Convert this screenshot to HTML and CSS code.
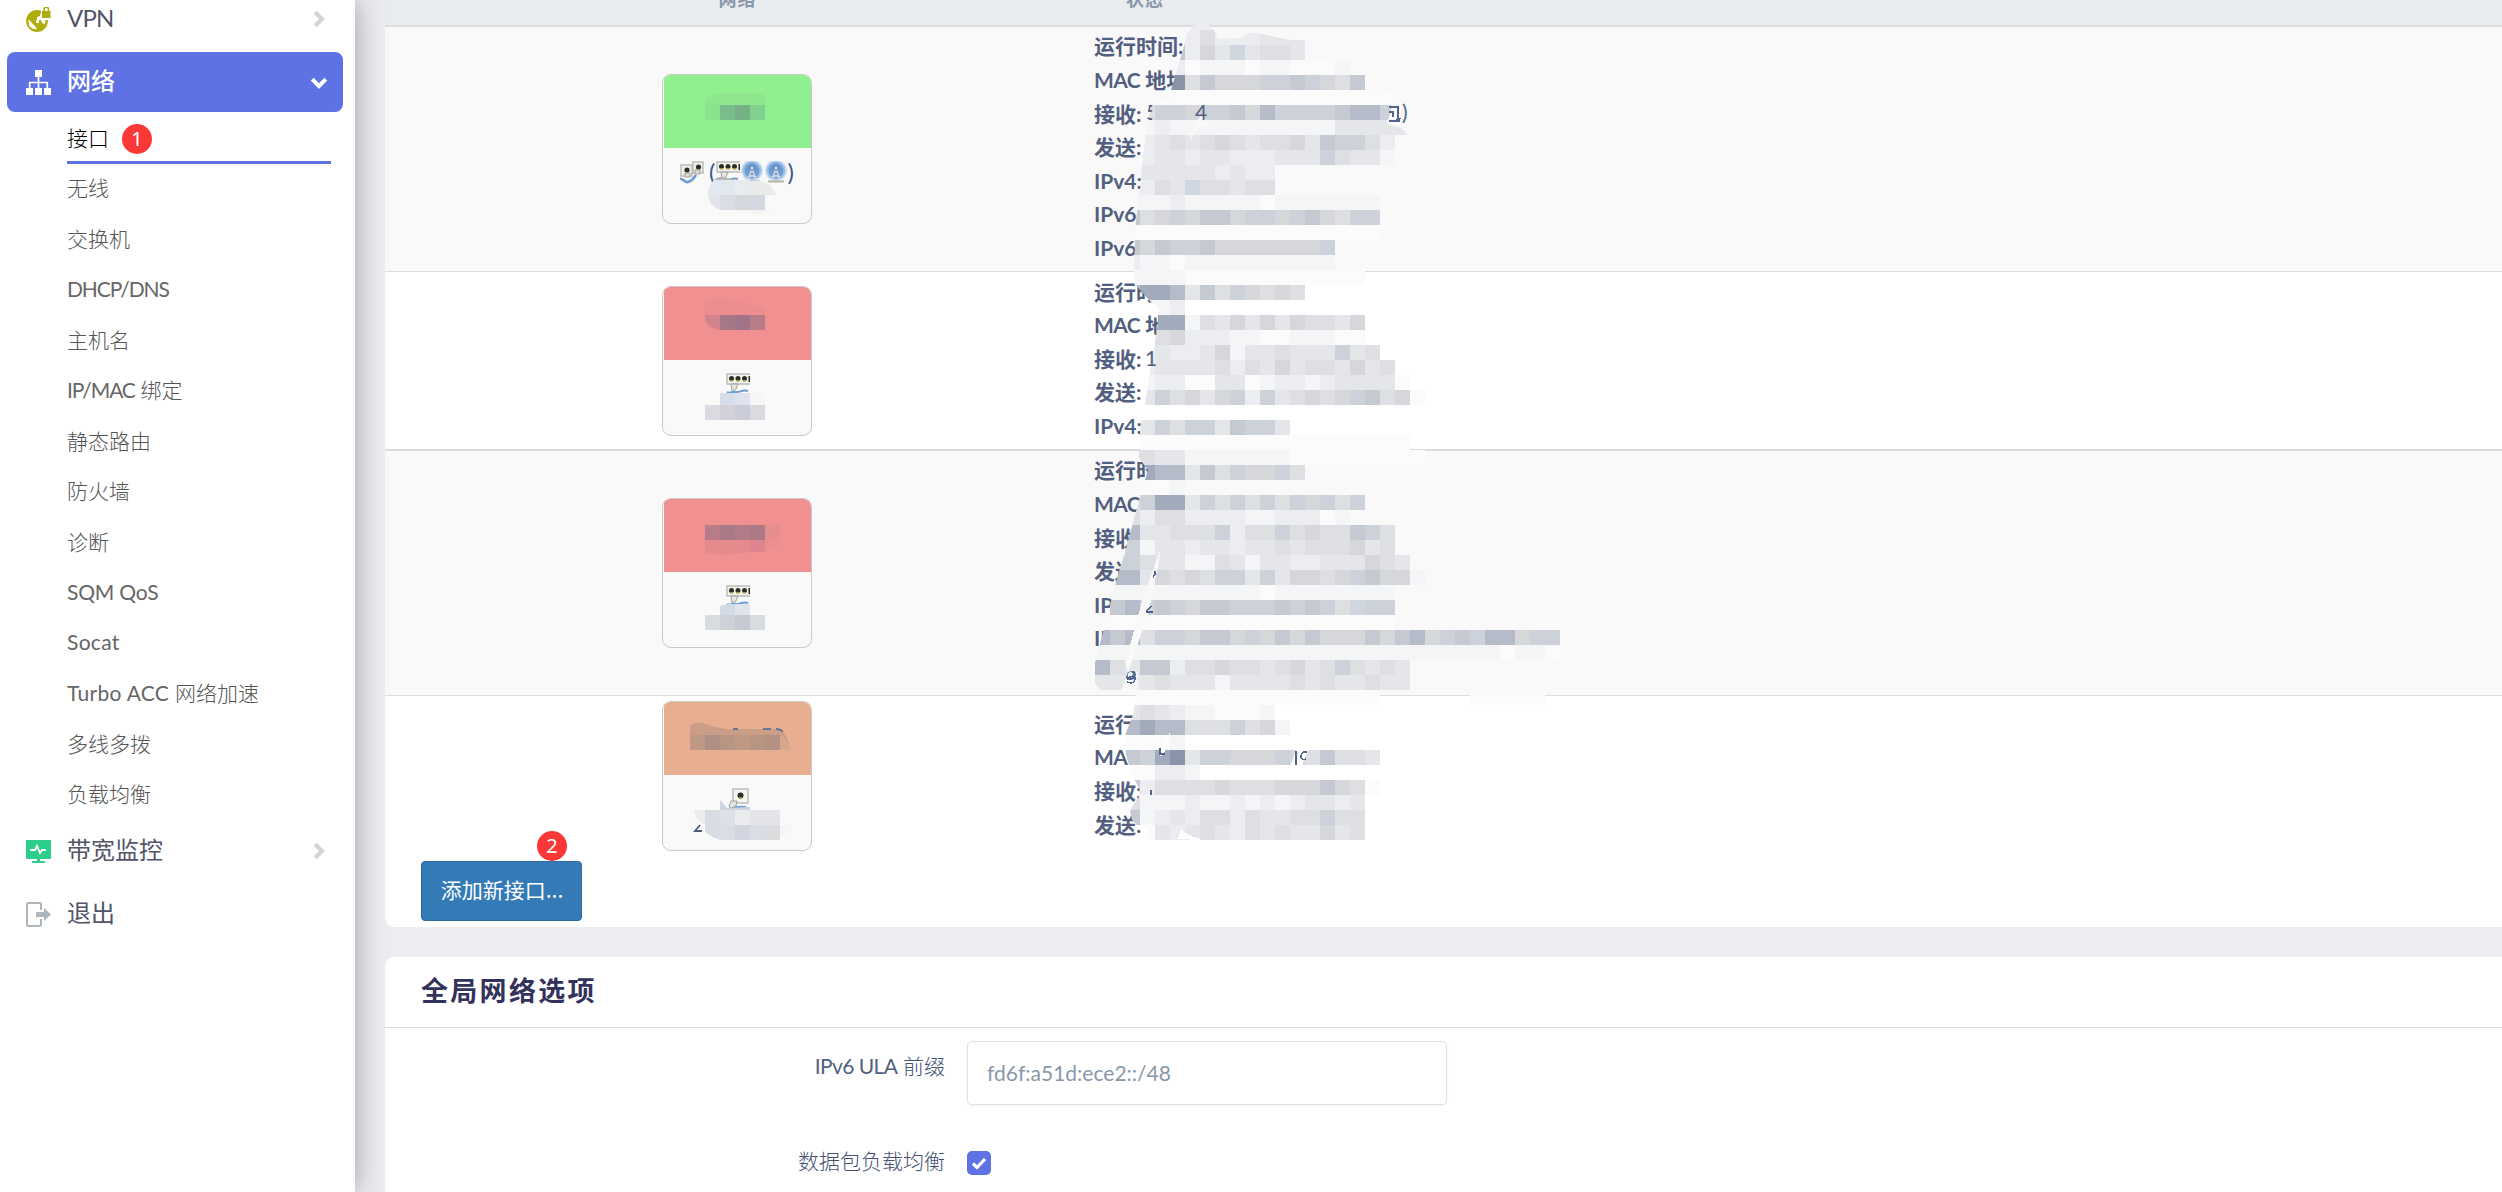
FILE: index.html
```html
<!DOCTYPE html>
<html lang="zh-CN">
<head>
<meta charset="utf-8">
<title>接口</title>
<link rel="stylesheet" href="styles.css">
</head>
<body>
<svg class="defs" width="0" height="0">
  <defs>
    <symbol id="chevron" viewBox="0 0 16 16"><path d="M4.5 2 10.8 8 4.5 14" fill="none" stroke="currentColor" stroke-width="3.6"/></symbol>
    <symbol id="port" viewBox="0 0 24 24">
      <path d="M7 1h15v14H7z" fill="#f4f4f1" stroke="#bdbdb8" stroke-width="1.5"/>
      <circle cx="14.500" cy="7.500" r="3" fill="#2d2f22"/><path d="M13 9h3v2h-3z" fill="#a69a35"/>
      <path d="M3 20c4 3 5-1 8-1s6-1 10 1" fill="none" stroke="#6d9bd3" stroke-width="2"/>
      <path d="M5 13h6l-1 5-5 2-2-2z" fill="#e5e5e1" stroke="#a2a29c"/>
    </symbol>
    <symbol id="switch" viewBox="0 0 24 24">
      <path d="M1 1h24v10H1z" fill="#f2f2ef" stroke="#bdbdb8" stroke-width="1.5"/>
      <g fill="#2d2f22"><circle cx="5.500" cy="5.500" r="2.500"/><circle cx="12" cy="5.500" r="2.500"/><circle cx="18.500" cy="5.500" r="2.500"/><path d="M22.500 3H24v6h-1.500z"/></g>
      <path d="M4 7h3v1.500H4zM10.500 7h3v1.500h-3zM17 7h3v1.500h-3z" fill="#a69a35"/>
      <path d="M1 19c3 2 6-1 9 0s7-3 12-1" fill="none" stroke="#6d9bd3" stroke-width="2"/>
      <path d="M5 11h7l-2 5-4 2z" fill="#e5e5e1" stroke="#a2a29c"/>
    </symbol>
    <symbol id="wifi" viewBox="0 0 24 24">
      <circle cx="12" cy="9.500" r="11" fill="#d3e1f3"/><circle cx="12" cy="9.500" r="9.500" fill="#9fc0e8"/><circle cx="12" cy="9.500" r="7.500" fill="#6c9bd4"/>
      <path d="M12 8 8 18M12 8l4 10M9 15h6" stroke="#d2d6da" stroke-width="1.800"/><path d="M4 20.500h16" stroke="#b3b2ab" stroke-width="2.200"/>
      <circle cx="12" cy="7" r="2" fill="#e9eef5" stroke="#5078a8"/>
    </symbol>
    <symbol id="ports" viewBox="0 0 24 24">
      <path d="M1 4h11v11H1zM13 1h10v11H13z" fill="#f0f0ed" stroke="#bdbdb8" stroke-width="1.500"/>
      <circle cx="7" cy="9" r="2.600" fill="#2d2f22"/><circle cx="18.500" cy="6" r="2.600" fill="#2d2f22"/>
      <path d="M5 12h5v4H5zM15 9h5v4h-5z" fill="#dededb" stroke="#a2a29c"/>
      <path d="M0 18c3-1 4 4 8 3s5-3 8-7" fill="none" stroke="#6d9bd3" stroke-width="2.600"/>
    </symbol>
    <clipPath id="smudge-edge"><path d="M1185 42 1187 34 1192 27 1200 23 1208 24 1214 30 1218 39 1240 38 1248 33 1258 33 1290 40 1305 40 1305 60 1330 60 1362 63 1366 72 1369 85 1380 86 1393 95 1391 110 1387 124 1401 128 1407 135H1600V860H1146L1148 829 1140 828 1132 820 1130 810 1140 795 1139 788 1132 775 1126 755 1125 735 1133 715 1137 690 1138 670 1128 672 1121 690H1100L1095 683V663L1110 605 1118 575 1127 545 1135 515 1142 490 1148 470 1139 458V440L1141 422 1145 405 1150 370 1157 330 1159 309 1148 299 1135 284 1134 270 1135 240 1136 220 1140 190 1142 165 1145 140 1148 120 1152 104 1169 100 1171 90 1180 60Z"/></clipPath>
  </defs>
</svg>

<aside class="sidebar">
  <nav class="menu">
    <a class="item">
      <svg class="ico" viewBox="0 0 25 25"><circle cx="11" cy="14" r="9.700" fill="none" stroke="#adad0c" stroke-width="2.400"/><path d="M2 11C4 6 9 3 15 5l-1 4-3 1v3h4l1 3 3 1-3 6-5 1-1-4-4-3z" fill="#adad0c"/><path d="M4 14l5 5-2 3-4-3zM10 13h3v3h-3z" fill="#fff"/><path d="M15 0h10v13H15z" fill="#fff"/><path d="M16 4h8.500v7H16z" fill="#adad0c"/><path d="M18 5V2.500a2.200 2.200 0 0 1 4.500 0V5" fill="none" stroke="#adad0c" stroke-width="1.600"/></svg>
      <span class="name latin">VPN</span><svg class="arrow"><use href="#chevron"/></svg>
    </a>
    <a class="item active">
      <svg class="ico" viewBox="0 0 25 25"><path d="M9 0h7v7H9zM0 18h7v7H0zM9 18h7v7H9zM18 18h7v7h-7z" fill="#fff"/><path d="M12.500 7v11M3.700 18v-5.500h17.600V18" fill="none" stroke="#fff" stroke-width="1.700"/></svg>
      <span class="name">网络</span><svg class="arrow down"><use href="#chevron"/></svg>
    </a>
    <div class="submenu">
      <a class="current">接口<b class="badge badge-one">1</b></a>
      <a>无线</a><a>交换机</a><a><span class="latin caps">DHCP/DNS</span></a><a>主机名</a>
      <a><span class="latin caps">IP/MAC</span> 绑定</a><a>静态路由</a><a>防火墙</a><a>诊断</a>
      <a><span class="latin">SQM QoS</span></a><a><span class="latin wide">Socat</span></a>
      <a><span class="latin wide">Turbo ACC</span> 网络加速</a><a>多线多拨</a><a>负载均衡</a>
    </div>
    <a class="item">
      <svg class="ico" viewBox="0 0 25 25"><path d="M1 1h23a1 1 0 0 1 1 1v17a1 1 0 0 1-1 1H1a1 1 0 0 1-1-1V2a1 1 0 0 1 1-1zM11 20h3v2h5v2H6v-2h5z" fill="#2dce89"/><path d="M4 11h5l2-4 3 7 2-3h4" fill="none" stroke="#fff" stroke-width="1.800"/></svg>
      <span class="name">带宽监控</span><svg class="arrow"><use href="#chevron"/></svg>
    </a>
    <a class="item">
      <svg class="ico" viewBox="0 0 25 25"><path d="M15 8V2.500A1.500 1.500 0 0 0 13.500 1h-11A1.500 1.500 0 0 0 1 2.500v20A1.500 1.500 0 0 0 2.500 24h11a1.500 1.500 0 0 0 1.500-1.500V17" fill="none" stroke="#adb5bd" stroke-width="2"/><path d="M10 10h8V6l7 6.500-7 6.500v-4h-8z" fill="#adb5bd"/></svg>
      <span class="name">退出</span>
    </a>
  </nav>
</aside>

<main class="content">
  <section class="card overview">
    <div class="row head"><div class="net">网络</div><div class="state">状态</div></div>
    <div class="row striped">
      <div class="net"><div class="iface">
        <div class="zone green"></div>
        <div class="devices"><svg><use href="#ports"/></svg><i>(</i><svg><use href="#switch"/></svg><svg><use href="#wifi"/></svg><svg><use href="#wifi"/></svg><i class="close">)</i></div>
        <svg class="mask" viewBox="662 74 150 150">
          <path d="M705 105v-5q4-7 22-7h28q10 1 10 3v9z" fill="#8ee78e"/><path d="M705 105h15v15h-15z" fill="#8be28e"/><path d="M720 105h15v15h-15z" fill="#79bd8d"/><path d="M735 105h15v15h-15z" fill="#75b087"/><path d="M750 105h15v15h-15z" fill="#81d090"/>
          <path d="M714 180q4-4 10-3l11 3z" fill="#b8b8b5"/><path d="M708 195q0-10 6-15h21v15z" fill="#e2e8ef"/><path d="M735 180h15v15h-15z" fill="#e8ebef"/><path d="M750 181q21-2 26 14h-26z" fill="#e9eaea"/>
          <path d="M708 195h12v15q-11-4-12-15z" fill="#e2e4e9"/><path d="M720 195h15v15h-15z" fill="#dadde3"/><path d="M735 195h15v15h-15z" fill="#d6d7dc"/><path d="M750 195h15v15h-15z" fill="#d3d8e1"/><path d="M733 210h39q-6 4-20 3z" fill="#f4f4f4"/>
        </svg>
      </div></div>
      <div class="state"><p>运行时间:</p><p><span class="latin">MAC</span> 地址:</p><p>接收:</p><p>发送:</p><p>IPv4:</p><p>IPv6:</p><p>IPv6:</p></div>
    </div>
    <div class="row plain">
      <div class="net"><div class="iface">
        <div class="zone red"></div><div class="devices"><svg><use href="#switch"/></svg></div>
        <svg class="mask" viewBox="662 286 150 150">
          <path d="M705 315v-10q5-9 22-7l38 10v15z" fill="#ec8e8f"/><path d="M705 315h15v15q-12-2-15-10z" fill="#d2848d"/><path d="M720 315h15v15h-15z" fill="#a67785"/><path d="M735 315h15v15h-15z" fill="#a27489"/><path d="M750 315h15v15h-15z" fill="#b67d88"/>
          <path d="M720 393h15v12h-15z" fill="#d7dee9"/><path d="M735 393h15v12h-15z" fill="#dfe3ed"/><path d="M750 393h15v12h-15z" fill="#f6f6f7"/><path d="M705 405h15v15h-15zM750 405h15v15h-15z" fill="#dadbe0"/><path d="M720 405h15v15h-15z" fill="#d0d2d8"/><path d="M735 405h15v15h-15z" fill="#cacdd7"/>
        </svg>
      </div></div>
      <div class="state"><p>运行时间:</p><p><span class="latin">MAC</span> 地址:</p><p>接收:</p><p>发送:</p><p>IPv4:</p></div>
    </div>
    <div class="row striped">
      <div class="net"><div class="iface">
        <div class="zone red"></div><div class="devices"><svg><use href="#switch"/></svg></div>
        <svg class="mask" viewBox="662 498 150 150">
          <path d="M705 525h15v15h-15z" fill="#b67d88"/><path d="M720 525h15v15h-15z" fill="#a97988"/><path d="M735 525h15v15h-15z" fill="#b17b88"/><path d="M750 525h15v15h-15z" fill="#ad7987"/><path d="M765 525h15v15h-15z" fill="#e68d8e"/><path d="M705 540h45v12q-34 5-45 0z" fill="#e68b8d"/><path d="M750 540h15v12h-15z" fill="#dd858f"/><path d="M765 540h15q-2 9-15 9z" fill="#eb8e8f"/>
          <path d="M720 615v-9q5-2 10-2h5v11z" fill="#d3dae6"/><path d="M735 604h15v11h-15z" fill="#e0e5ed"/><path d="M705 615h15v15h-15zM750 615h15v15h-15z" fill="#d8dbdf"/><path d="M720 615h15v15h-15z" fill="#cdd1d8"/><path d="M735 615h15v15h-15z" fill="#c6cad3"/>
        </svg>
      </div></div>
      <div class="state"><p>运行时间:</p><p><span class="latin">MAC</span> 地址:</p><p>接收:</p><p>发送:</p><p>IPv4:</p><p>IPv6:</p><p>IPv6:</p></div>
    </div>
    <div class="row plain last">
      <div class="net"><div class="iface">
        <div class="zone orange"></div><div class="devices"><svg><use href="#port"/></svg></div>
        <svg class="mask" viewBox="662 701 150 150">
          <path d="M690 735v-9q7-6 15-2 18 6 30 5h43q11 6 12 21h-100z" fill="#c99d86"/><path d="M780 735q8 3 10 15h-10z" fill="#d9a78b"/><path d="M690 735h15v15h-15zM735 735h15v15h-15z" fill="#bf9983"/><path d="M705 735h15v15h-15z" fill="#ae8e85"/><path d="M720 735h15v15h-15zM750 735h15v15h-15z" fill="#b89583"/><path d="M765 735h15v15h-15z" fill="#b69085"/><path d="M733 729h5M763 729h8M776 729q5 0 7 3" fill="none" stroke="#4c658e" stroke-width="1.300"/>
          <path d="M694 810h11v15q-10-5-11-15zM735 810h15v15h-15z" fill="#ebecee"/><path d="M705 810h15v15h-15z" fill="#dadce3"/><path d="M720 800l7 8 23-1v3h-30z" fill="#cdd5df"/><path d="M720 810h15v15h-15z" fill="#dde1e7"/><path d="M750 810h30v15h-30z" fill="#e2e4e8"/><path d="M705 825h15v15q-9-3-15-8z" fill="#d9dde3"/><path d="M720 825h15v15h-15zM750 825h15v15h-15z" fill="#dadde3"/><path d="M735 825h15v15h-15z" fill="#d1d5df"/><path d="M765 825h15v15h-15z" fill="#dbdcde"/><path d="M780 825h12q0 8-12 12z" fill="#f4f5f7"/>
          <path d="M700 825l-5 6h7" fill="none" stroke="#4c5a7c" stroke-width="1.800"/>
        </svg>
      </div></div>
      <div class="state"><p>运行时间:</p><p><span class="latin">MAC</span> 地址:</p><p>接收:</p><p>发送:</p></div>
    </div>
    <div class="actions"><button class="add">添加新接口...</button><b class="badge badge-two">2</b></div>
    <svg class="smudge" viewBox="1080 15 500 845">
      <g id="cells" clip-path="url(#smudge-edge)"></g>
      <path d="M1190 139q3-16 12-23l8 9q-15 2-19 14zM1160 551h1l-12 60-21 62-3-10 18-65z" fill="#f9f9f9"/>
      <path d="M1159 751 1170 732 1167 748 1161 757z" fill="#fff"/>
      <path d="M1291 765l5-15h12l-6 15zM1178 839l3-10q7 8 18 9l1 2z" fill="#fff"/>
      <g class="scraps"><text x="1146" y="120" clip-path="inset(0 6px 0 0)">5</text><text x="1195" y="120">4</text><text x="1402" y="120">)</text><text x="1145" y="366">1</text></g>
      <g fill="none" stroke="#51648b" stroke-width="1.500"><path d="M1389 107h9v12q1 1-2 1M1389 112h4v5M1389 121h10l1-3M1296 751v14M1307 752q-6-1-6 5 1 4 5 2M1155 571q1 4-2 6M1146 612h7M1147 611l4-5M1127 679q6-5 8-1 0 7-8 4M1160 748v6h5M1151 790v5"/></g>
    </svg>
  </section>

  <section class="card options">
    <h3>全局网络选项</h3>
    <div class="field"><label><span class="latin">IPv6 ULA</span> 前缀</label><input class="text" value="fd6f:a51d:ece2::/48"></div>
    <div class="field check"><label>数据包负载均衡</label><svg class="checkbox" viewBox="0 0 24 24"><rect width="24" height="24" rx="5" fill="#5e72e4"/><path d="M6 12.500l4 4 8-8.500" fill="none" stroke="#fff" stroke-width="3.200"/></svg></div>
  </section>
</main>
<script src="mosaic.js"></script>
</body>
</html>
```
FILE: styles.css
```css
* { box-sizing: border-box; }
body {
  margin: 0;
  display: flex;
  width: 2502px;
  height: 1192px;
  overflow: hidden;
  background: #ebedf0;
  color: #525f7f;
  font-family: Lato, "Noto Sans CJK SC", sans-serif;
  font-size: 21px;
}
.defs { position: absolute; }
.sidebar {
  flex: none;
  width: 355px;
  height: 1192px;
  padding: 0 12px 0 7px;
  background: #fff;
  box-shadow: 0 0 28px rgba(0, 0, 0, .34);
  z-index: 1;
}
.menu { margin-top: -11px; }
.item {
  display: flex;
  align-items: center;
  height: 60px;
  margin-bottom: 3px;
  padding: 0 15px 0 19px;
  border-radius: 8px;
  color: #525468;
  font-size: 24px;
  font-weight: 400;
}
.ico { width: 25px; height: 25px; }
.name { flex: 1; margin: -5px 0 0 16px; }
.name.latin { margin-top: -4px; }
.arrow { width: 18px; height: 18px; color: #ced4da; }
.arrow.down { transform: rotate(90deg); color: #fff; position: relative; top: 1px; }
.item.active { background: #5e72e4; color: #fff; font-weight: 500; margin-bottom: 0; }
.submenu { padding: 1px 12px 1px 60px; color: #555; font-weight: 300; }
.submenu a {
  display: flex;
  align-items: center;
  height: 50.5px;
  padding-bottom: 3px;
  white-space: pre;
}
.submenu .latin { font-weight: 400; color: #666; letter-spacing: -.2px; }
.submenu .caps { letter-spacing: -1.1px; }
.submenu .wide { letter-spacing: .3px; }
.submenu .current { border-bottom: 3px solid #5e72e4; color: #000; padding: 0; position: relative; }
.item .latin { font-weight: 400; letter-spacing: -.8px; }
.badge {
  position: absolute;
  width: 30px;
  height: 30px;
  border-radius: 50%;
  background: #fb3838;
  color: #fff;
  font: 20px/29px "Noto Sans", sans-serif;
  text-align: center;
}
.badge-one { left: 55px; top: 11px; }
.badge-two { left: 116px; top: -30px; }

.content { flex: 1; padding-left: 30px; overflow: hidden; }
.card { background: #fff; border-radius: 9px 0 0 9px; }
.overview {
  position: relative;
  display: flow-root;
  height: 927px;
  margin-bottom: 30px;
  border-top-left-radius: 0;
}
.row { display: grid; grid-template-columns: 704px 1fr; align-items: center; }
.head {
  height: 57px;
  margin-top: -30px;
  background: #e8ecef;
  border-bottom: 2px solid #dcdddd;
  color: #8898aa;
  font-size: 18px;
  font-weight: 700;
  letter-spacing: 1px;
  text-align: center;
}
.head .state { padding: 0 0 0 37px; text-align: left; }
.head .net { padding-left: 1px; }
.striped { height: 245px; background: #f9f9f9; border-bottom: 1px solid #dcdcdc; }
.plain { height: 179px; border-bottom: 2px solid #dcdcdc; }
.plain.last { height: 160px; border: 0; }
.net { display: flex; justify-content: center; }
.state { padding: 0 0 4px 5px; }
.state p { margin: 0; line-height: 33.6px; font-weight: 700; white-space: pre; }
.state .latin { letter-spacing: -.6px; }
.iface {
  position: relative;
  width: 150px;
  height: 150px;
  padding-left: 1px;
  border: 1px solid #c9c9c9;
  border-radius: 9px;
  background: #f9f9f9;
  overflow: hidden;
}
.zone { height: 73px; }
.green { background: #90f090; }
.red { background: #f09090; }
.orange { background: #e7af90; }
.devices { display: flex; justify-content: center; padding-top: 13px; height: 40px; }
.devices svg { width: 24px; height: 24px; }
.devices i { width: 12px; font: 24px/22px Lato, sans-serif; text-align: right; color: #37598f; }
.devices .close { width: 8px; text-align: left; }
.mask { position: absolute; left: -1px; top: -1px; width: 150px; height: 150px; }
.smudge { position: absolute; left: 695px; top: 15px; width: 500px; height: 845px; shape-rendering: crispEdges; }
.scraps { font-size: 21px; fill: #525f7f; }
.actions { position: relative; margin: 5px 0 0 36px; }
.add {
  display: block;
  width: 161px;
  height: 60px;
  padding: 0 0 5px 1px;
  border: 1px solid #2e6da4;
  border-radius: 4px;
  background: #337ab7;
  color: #fff;
  font: 21px "Noto Sans CJK SC", sans-serif;
}
.options { height: 300px; border-radius: 9px 0 0 0; }
.options h3 {
  height: 71px;
  margin: 0;
  padding-left: 36px;
  border-bottom: 1px solid #dcdddf;
  color: #32325d;
  font-size: 27px;
  line-height: 67px;
  letter-spacing: 2.3px;
}
.field { display: flex; align-items: flex-start; padding-top: 13px; color: #465273; font-weight: 300; }
.field label { width: 560px; margin-right: 22px; line-height: 50px; text-align: right; }
.field .latin { font-weight: 400; color: #525f7f; letter-spacing: -.6px; }
.field .text {
  width: 480px;
  height: 64px;
  padding: 0 19px 2px;
  border: 1px solid #dee2e6;
  border-radius: 5px;
  color: #8898aa;
  font: 21px Lato, sans-serif;
  box-shadow: 0 1px 3px rgba(50, 50, 93, .06);
}
.check { padding-top: 31px; }
.checkbox { width: 24px; height: 24px; margin-top: 15px; }
```
FILE: mosaic.js
```javascript
// Pixelated blocks that hide the private values: [y, first column, tones], 15px grid from x = 1080.
const tones = {
  a: '#fbfbfb', b: '#f4f5f6', c: '#ecedf0', d: '#e4e6e9', e: '#dddfe3', f: '#d5d7db',
  g: '#cdd1da', h: '#c5c9d2', i: '#b5bbc8', j: '#a2abbb', k: '#8b93a8', B: '#cfd6e0'
};
const rows = [
  [15, 6, 'cccc'], [30, 6, 'ccecccdddc'], [45, 6, 'hcfdBdeed'], [60, 6, 'cabbbabbaaab'],
  [75, 6, 'kehfffgghgfeh'], [90, 5, 'aaaaaaaaaaaaaaaa'], [105, 4, 'eggfgghfigggghiig'],
  [120, 4, 'bcbbbbbbbbbbbddddd'], [135, 4, 'cdedefedeefdhggec'], [150, 4, 'cddcddcccdddgeddb'],
  [165, 3, 'ddddddcdcc'], [180, 3, 'dcedBeedee'], [195, 3, 'bbbcbbbbbabbbbbbb'],
  [210, 3, 'hefgfhhfggfghfegg'], [225, 3, 'aaaaaaaaaaaaaaaaa'], [240, 3, 'hfhgghfffffffg'],
  [255, 3, 'cbbabbbbbbbbbb'], [270, 3, 'bbbbaaaaaaaaaaaa'], [285, 3, 'ijjidhegfefe'],
  [300, 4, 'bbc'], [315, 5, 'jjbedfdfdfeedf'], [330, 5, 'efcccbbaabbbaa'],
  [345, 4, 'cdccdfbddedddgde'], [360, 4, 'cddddecedfdeedfde'], [375, 4, 'bccaaddabccbcdddda'],
  [390, 4, 'dgefdfgcgdefefghefa'], [420, 4, 'dgeggdhggd'], [435, 4, 'aaaaaaaaaaaaaaaaaa'],
  [450, 3, 'eeddbbbbbbbaaaaaaaaa'], [465, 4, 'jiidhegffge'], [480, 4, 'aab'],
  [495, 3, 'egjjdgegegegfgeg'], [510, 3, 'eceeccccbbcccab'], [525, 3, 'iddeeegceegefeehge'],
  [540, 3, 'gbddcddcddedeeefde'], [555, 2, 'ggeddbbedbddccdddfed'], [570, 2, 'iidfefeggdgdffefghffb'],
  [585, 2, 'bbbbbbbbbbabbbbbbbb'], [600, 2, 'highgfhhggghghgeBgg'], [615, 1, 'aaaaaaaaaaaaaaaaaaaa'],
  [630, 1, 'ihieggfhhfgfhfhfffhfhifghgiifgg'], [645, 1, 'bbbbbbbbbbbbbbbbbbbbbbbbbbbabba'],
  [660, 1, 'iedhhceefeedefdegeded'], [675, 1, 'ddcdedddbddddededdedd'], [690, 3, 'aaaaaaaaaaaaaaaaa......aaaaa'],
  [705, 3, 'dedcbbaaab'], [720, 3, 'ijiieeegefb'], [735, 3, 'aaab'], [750, 3, 'hgjkdggfffgfeheed'],
  [765, 3, 'aaccb'], [780, 3, 'hceeeefeeefffhfea'], [795, 3, 'ebbbcbbcbcbcddcd'],
  [810, 3, 'hbcdceeceddeegee'], [825, 4, 'adcdedcededdfde']
];
const group = document.getElementById('cells');
for (const [y, first, line] of rows) {
  [...line].forEach((tone, n) => {
    if (tone === '.') return;
    const cell = document.createElementNS('http://www.w3.org/2000/svg', 'rect');
    cell.setAttribute('x', 1080 + (first + n) * 15);
    cell.setAttribute('y', y);
    cell.setAttribute('width', 15);
    cell.setAttribute('height', 15);
    cell.setAttribute('fill', tones[tone]);
    group.appendChild(cell);
  });
}
```
